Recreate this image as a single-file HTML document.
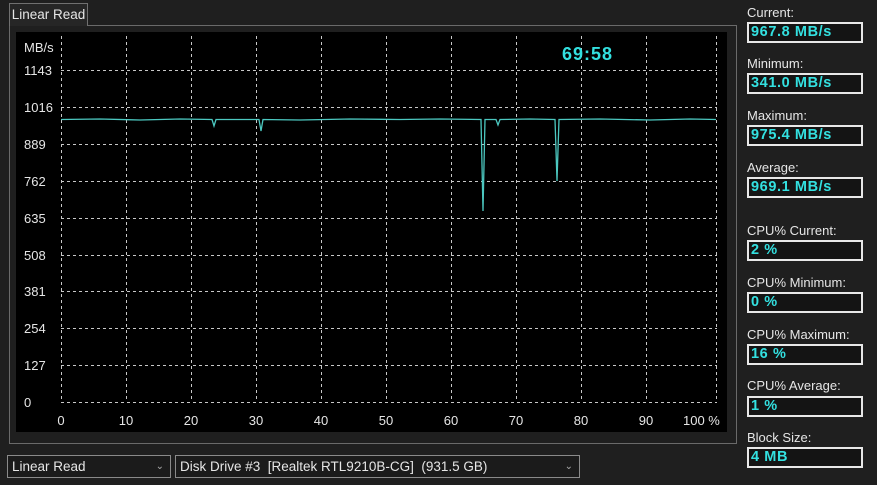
<!DOCTYPE html>
<html><head><style>
body{margin:0;width:877px;height:485px;background:#1f1f1f;position:relative;overflow:hidden;font-family:"Liberation Sans",sans-serif;color:#e6e6e6}
.tab{position:absolute;left:9px;top:3px;width:79px;height:23px;border:1px solid #707070;border-bottom:none;background:#262626;font-size:13.5px;line-height:22px;text-align:center;box-sizing:border-box;z-index:2}
.panel{position:absolute;left:9px;top:25px;width:728px;height:419px;border:1px solid #6a6a6a;box-sizing:border-box}
.lbl{position:absolute;left:747px;font-size:13px;color:#e6e6e6}
.box{position:absolute;left:747px;width:116px;height:21px;border:2px solid #e8e8e8;box-sizing:border-box;background:#141414;color:#33e0e0;font-weight:bold;font-size:14.5px;line-height:17px;padding-left:2px;letter-spacing:0.6px}
.dd{position:absolute;top:455px;height:23px;border:1px solid #8a8a8a;box-sizing:border-box;background:#1b1b1b;font-size:13.5px;line-height:21px;padding-left:4px;color:#e6e6e6}
.dd span{position:absolute;right:6px;top:0;color:#aaa;font-size:10px}
</style></head><body>
<div class="tab">Linear Read</div>
<div class="panel"></div>
<svg style="position:absolute;left:0;top:0" width="877" height="485">
<rect x="16" y="32" width="711" height="400" fill="#000"/>
<g stroke="#c8c8c8" stroke-width="1" stroke-dasharray="3,3" fill="none">
<path d="M61.5 36V402M126.5 36V402M191.5 36V402M256.5 36V402M321.5 36V402M386.5 36V402M451.5 36V402M516.5 36V402M581.5 36V402M646.5 36V402M716.5 36V402"/>
<path d="M61 70.5H717M61 107.5H717M61 144.5H717M61 181.5H717M61 218.5H717M61 255.5H717M61 291.5H717M61 328.5H717M61 365.5H717M61 402.5H717"/>
</g>
<path d="M61 119.5L100 119L140 120L180 119L212 119.5L214 126L216 119.5L259 119.5L261 131L263 119.5L300 120L350 119L400 119.5L440 119L481 119.5L482 165L483 211L484 165L485 119.5L496 119.5L498 125L500 119.5L530 119L555 119.5L556 150L557 181L558 150L559 119.5L600 119L650 120L690 119L716 119.5" stroke="#4cc8c0" stroke-width="1.3" fill="none"/>
<g fill="#e6e6e6" font-size="13" font-family="Liberation Sans,sans-serif">
<text x="24" y="52">MB/s</text>
<text x="24" y="75">1143</text><text x="24" y="112">1016</text><text x="24" y="149">889</text><text x="24" y="186">762</text><text x="24" y="223">635</text><text x="24" y="260">508</text><text x="24" y="296">381</text><text x="24" y="333">254</text><text x="24" y="370">127</text><text x="24" y="407">0</text>
<g text-anchor="middle"><text x="61" y="425">0</text><text x="126" y="425">10</text><text x="191" y="425">20</text><text x="256" y="425">30</text><text x="321" y="425">40</text><text x="386" y="425">50</text><text x="451" y="425">60</text><text x="516" y="425">70</text><text x="581" y="425">80</text><text x="646" y="425">90</text></g>
<text x="683" y="425">100 %</text>
</g>
<text x="562" y="60" fill="#33e0e0" font-size="18" font-weight="bold" letter-spacing="1" font-family="Liberation Sans,sans-serif">69:58</text>
</svg>
<div class="lbl" style="top:5px">Current:</div><div class="box" style="top:22px">967.8 MB/s</div>
<div class="lbl" style="top:56px">Minimum:</div><div class="box" style="top:73px">341.0 MB/s</div>
<div class="lbl" style="top:108px">Maximum:</div><div class="box" style="top:125px">975.4 MB/s</div>
<div class="lbl" style="top:160px">Average:</div><div class="box" style="top:177px">969.1 MB/s</div>
<div class="lbl" style="top:223px">CPU% Current:</div><div class="box" style="top:240px">2 %</div>
<div class="lbl" style="top:275px">CPU% Minimum:</div><div class="box" style="top:292px">0 %</div>
<div class="lbl" style="top:327px">CPU% Maximum:</div><div class="box" style="top:344px">16 %</div>
<div class="lbl" style="top:378px">CPU% Average:</div><div class="box" style="top:396px">1 %</div>
<div class="lbl" style="top:430px">Block Size:</div><div class="box" style="top:447px">4 MB</div>
<div class="dd" style="left:7px;width:164px">Linear Read<span>&#8964;</span></div>
<div class="dd" style="left:175px;width:405px">Disk Drive #3&nbsp; [Realtek RTL9210B-CG]&nbsp; (931.5 GB)<span>&#8964;</span></div>
</body></html>
